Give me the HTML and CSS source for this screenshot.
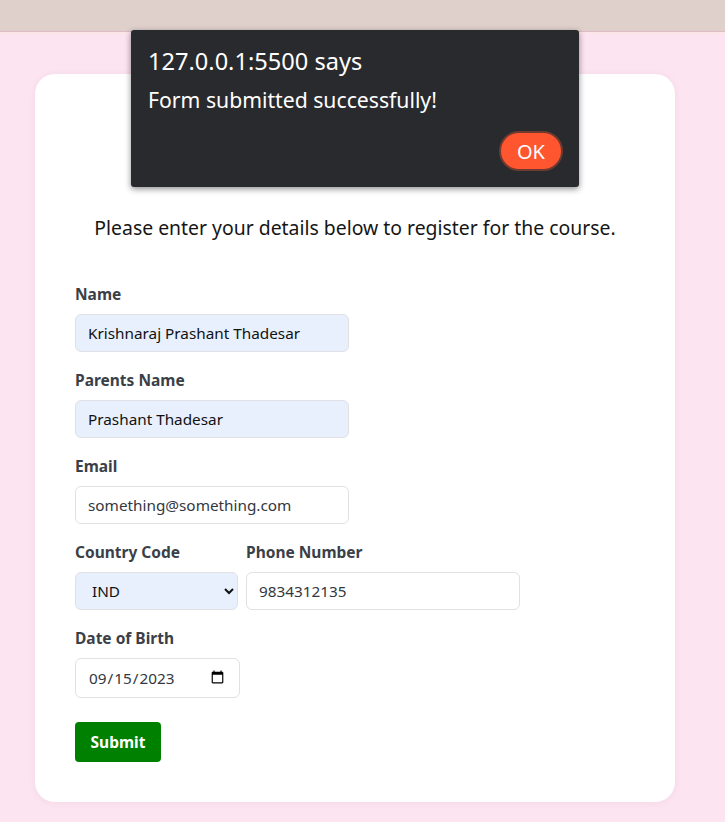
FILE: index.html
```html
<!DOCTYPE html>
<html lang="en">
<head>
<meta charset="utf-8">
<title>Course Registration</title>
<link rel="stylesheet" href="styles.css">
</head>
<body>
<header class="topbar"></header>
<main class="page">
  <section class="card">
    <h1 class="title">Course Registration</h1>
    <p class="intro">Please enter your details below to register for the course.</p>
    <form class="form">
      <div class="field">
        <label class="label" for="name">Name</label>
        <input class="input filled" id="name" type="text" value="Krishnaraj Prashant Thadesar">
      </div>
      <div class="field">
        <label class="label" for="parent">Parents Name</label>
        <input class="input filled" id="parent" type="text" value="Prashant Thadesar">
      </div>
      <div class="field">
        <label class="label" for="email">Email</label>
        <input class="input" id="email" type="email" value="something@something.com">
      </div>
      <div class="row">
        <div class="field">
          <label class="label" for="code">Country Code</label>
          <select class="input select filled" id="code">
            <option>IND</option>
            <option>USA</option>
          </select>
        </div>
        <div class="field">
          <label class="label" for="phone">Phone Number</label>
          <input class="input" id="phone" type="tel" value="9834312135">
        </div>
      </div>
      <div class="field field-last">
        <label class="label" for="dob">Date of Birth</label>
        <input class="input date" id="dob" type="date" value="2023-09-15">
      </div>
      <button class="submit" type="button">Submit</button>
    </form>
  </section>
</main>
<div class="dialog" role="alertdialog">
  <div class="dialog-title">127.0.0.1:5500 says</div>
  <div class="dialog-msg">Form submitted successfully!</div>
  <div class="dialog-actions"><button class="ok" type="button">OK</button></div>
</div>
</body>
</html>
```
FILE: styles.css
```css
* { box-sizing: border-box; }
html, body { margin: 0; padding: 0; }
body {
  background: #fce4f1;
  font-family: "Noto Sans", "DejaVu Sans", sans-serif;
  color: #1c1c1c;
  min-height: 822px;
}
.topbar {
  height: 34px;
  background: #dfd0cc;
  border-bottom: 2px solid #fde4e8;
  box-shadow: inset 0 -1px 0 #dcbcc5;
}
.page {
  padding: 40px 50px 20px 35px;
}
.card {
  width: 640px;
  background: #fff;
  border-radius: 20px;
  padding: 40px 40px 40px;
  box-shadow: 0 1px 6px rgba(200, 150, 170, 0.15);
}
.title {
  margin: 0 0 62px;
  text-align: center;
  font-size: 30px;
  line-height: 40px;
  color: #222;
}
.intro {
  margin: 0 0 44px;
  text-align: center;
  font-size: 19.4px;
  line-height: 24px;
  color: #161616;
}
.form {
  display: flex;
  flex-direction: column;
  align-items: flex-start;
}
.field {
  display: flex;
  flex-direction: column;
  margin-bottom: 18px;
}
.field-last { margin-bottom: 24px; }
.row {
  display: flex;
  gap: 8px;
}
.label {
  font-size: 15.5px;
  line-height: 20px;
  font-weight: 700;
  color: #3b3f48;
  margin-bottom: 10px;
}
.input {
  width: 274px;
  height: 38px;
  border: 1px solid #e0e1e5;
  border-radius: 6px;
  background: #fff;
  padding: 0 12px;
  font-family: inherit;
  font-size: 15.3px;
  color: #33373f;
  outline: none;
}
.filled {
  background: #e8f0fe;
  color: #111;
}
.select {
  width: 163px;
  padding: 0 8px 0 12px;
}
.date {
  width: 165px;
  height: 40px;
}
.submit {
  width: 86px;
  height: 40px;
  border: 0;
  border-radius: 4px;
  background: #008000;
  color: #fff;
  font-family: inherit;
  font-size: 15.5px;
  font-weight: 700;
  cursor: pointer;
}
.dialog {
  position: absolute;
  top: 30px;
  left: 131px;
  width: 448px;
  height: 157px;
  background: #292a2e;
  border-radius: 3px;
  box-shadow: 0 2px 6px rgba(0, 0, 0, 0.45);
  padding: 14px 16px 16px 17px;
  color: #fff;
  display: flex;
  flex-direction: column;
}
.dialog-title {
  font-size: 23.6px;
  line-height: 34px;
}
.dialog-msg {
  font-size: 21.2px;
  line-height: 28px;
  margin-top: 8px;
}
.dialog-actions {
  margin-top: auto;
  display: flex;
  justify-content: flex-end;
}
.ok {
  width: 64px;
  height: 40px;
  border-radius: 20px;
  background: #ff5630;
  border: 2px solid #6f3b30;
  color: #fff;
  font-family: inherit;
  font-size: 20px;
  padding: 0;
}
```
